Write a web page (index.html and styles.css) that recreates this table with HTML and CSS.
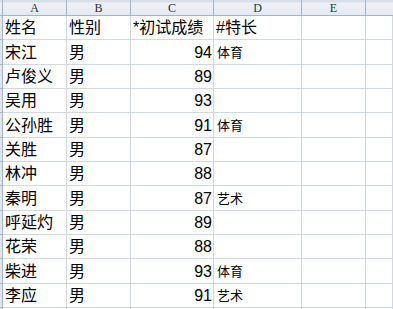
FILE: index.html
```html
<!DOCTYPE html>
<html lang="zh-CN">
<head>
<meta charset="utf-8">
<title>Sheet</title>
<link rel="stylesheet" href="styles.css">
</head>
<body>
<div class="sheet">
  <div class="hd corner"></div>
  <div class="hd col">A</div>
  <div class="hd col">B</div>
  <div class="hd col">C</div>
  <div class="hd col">D</div>
  <div class="hd col">E</div>
  <div class="hd col last"></div>

  <div class="rh"></div><div class="c">姓名</div><div class="c">性别</div><div class="c">*初试成绩</div><div class="c">#特长</div><div class="c"></div><div class="c"></div>
  <div class="rh"></div><div class="c">宋江</div><div class="c">男</div><div class="c num">94</div><div class="c sm">体育</div><div class="c"></div><div class="c"></div>
  <div class="rh"></div><div class="c">卢俊义</div><div class="c">男</div><div class="c num">89</div><div class="c sm"></div><div class="c"></div><div class="c"></div>
  <div class="rh"></div><div class="c">吴用</div><div class="c">男</div><div class="c num">93</div><div class="c sm"></div><div class="c"></div><div class="c"></div>
  <div class="rh"></div><div class="c">公孙胜</div><div class="c">男</div><div class="c num">91</div><div class="c sm">体育</div><div class="c"></div><div class="c"></div>
  <div class="rh"></div><div class="c">关胜</div><div class="c">男</div><div class="c num">87</div><div class="c sm"></div><div class="c"></div><div class="c"></div>
  <div class="rh"></div><div class="c">林冲</div><div class="c">男</div><div class="c num">88</div><div class="c sm"></div><div class="c"></div><div class="c"></div>
  <div class="rh"></div><div class="c">秦明</div><div class="c">男</div><div class="c num">87</div><div class="c sm">艺术</div><div class="c"></div><div class="c"></div>
  <div class="rh"></div><div class="c">呼延灼</div><div class="c">男</div><div class="c num">89</div><div class="c sm"></div><div class="c"></div><div class="c"></div>
  <div class="rh"></div><div class="c">花荣</div><div class="c">男</div><div class="c num">88</div><div class="c sm"></div><div class="c"></div><div class="c"></div>
  <div class="rh"></div><div class="c">柴进</div><div class="c">男</div><div class="c num">93</div><div class="c sm">体育</div><div class="c"></div><div class="c"></div>
  <div class="rh"></div><div class="c">李应</div><div class="c">男</div><div class="c num">91</div><div class="c sm">艺术</div><div class="c"></div><div class="c"></div>
  <div class="rh sel"></div><div class="c tail"></div><div class="c tail"></div><div class="c tail"></div><div class="c tail"></div><div class="c tail"></div><div class="c tail"></div>
</div>
</body>
</html>
```

FILE: styles.css
```css
html, body {
  margin: 0;
  padding: 0;
  background: #ffffff;
  overflow: hidden;
}

.sheet {
  display: grid;
  grid-template-columns: 3px 64px 64px 83px 88px 64px 1fr;
  grid-template-rows: 16px repeat(12, 24.34px) 1fr;
  height: 309px;
  overflow: hidden;
  font-family: "Liberation Sans", "Noto Sans CJK SC", sans-serif;
  color: #000000;
}

.sheet > div {
  box-sizing: border-box;
  overflow: hidden;
  white-space: nowrap;
}

.hd {
  background: linear-gradient(#d8dfe9 0, #d8dfe9 2px, #eef2f7 3px, #e4e9f1 100%);
  border-right: 1px solid #9eb6ce;
  border-bottom: 1px solid #9eb6ce;
  font-family: "Liberation Serif", "DejaVu Serif", serif;
  font-size: 12px;
  line-height: 11px;
  color: #27313f;
  display: flex;
  align-items: flex-end;
  justify-content: center;
  padding-bottom: 1px;
}

.hd.last {
  border-right: none;
}

.rh {
  background: #dfe6f0;
  border-right: 1px solid #9eb6ce;
  border-bottom: 1px solid #9eb6ce;
}

.rh.sel {
  background: #f9d99a;
  border-bottom: none;
}

.c {
  border-right: 1px solid #d0d7e5;
  border-bottom: 1px solid #d0d7e5;
  font-size: 16px;
  line-height: 18px;
  display: flex;
  align-items: flex-end;
  padding: 0 2px 2px 2px;
}

.c.tail {
  border-bottom: none;
}

.c.num {
  justify-content: flex-end;
  padding-right: 1px;
}

.c.sm {
  font-size: 13px;
  line-height: 16px;
  padding-left: 3px;
  padding-bottom: 3px;
}
```
